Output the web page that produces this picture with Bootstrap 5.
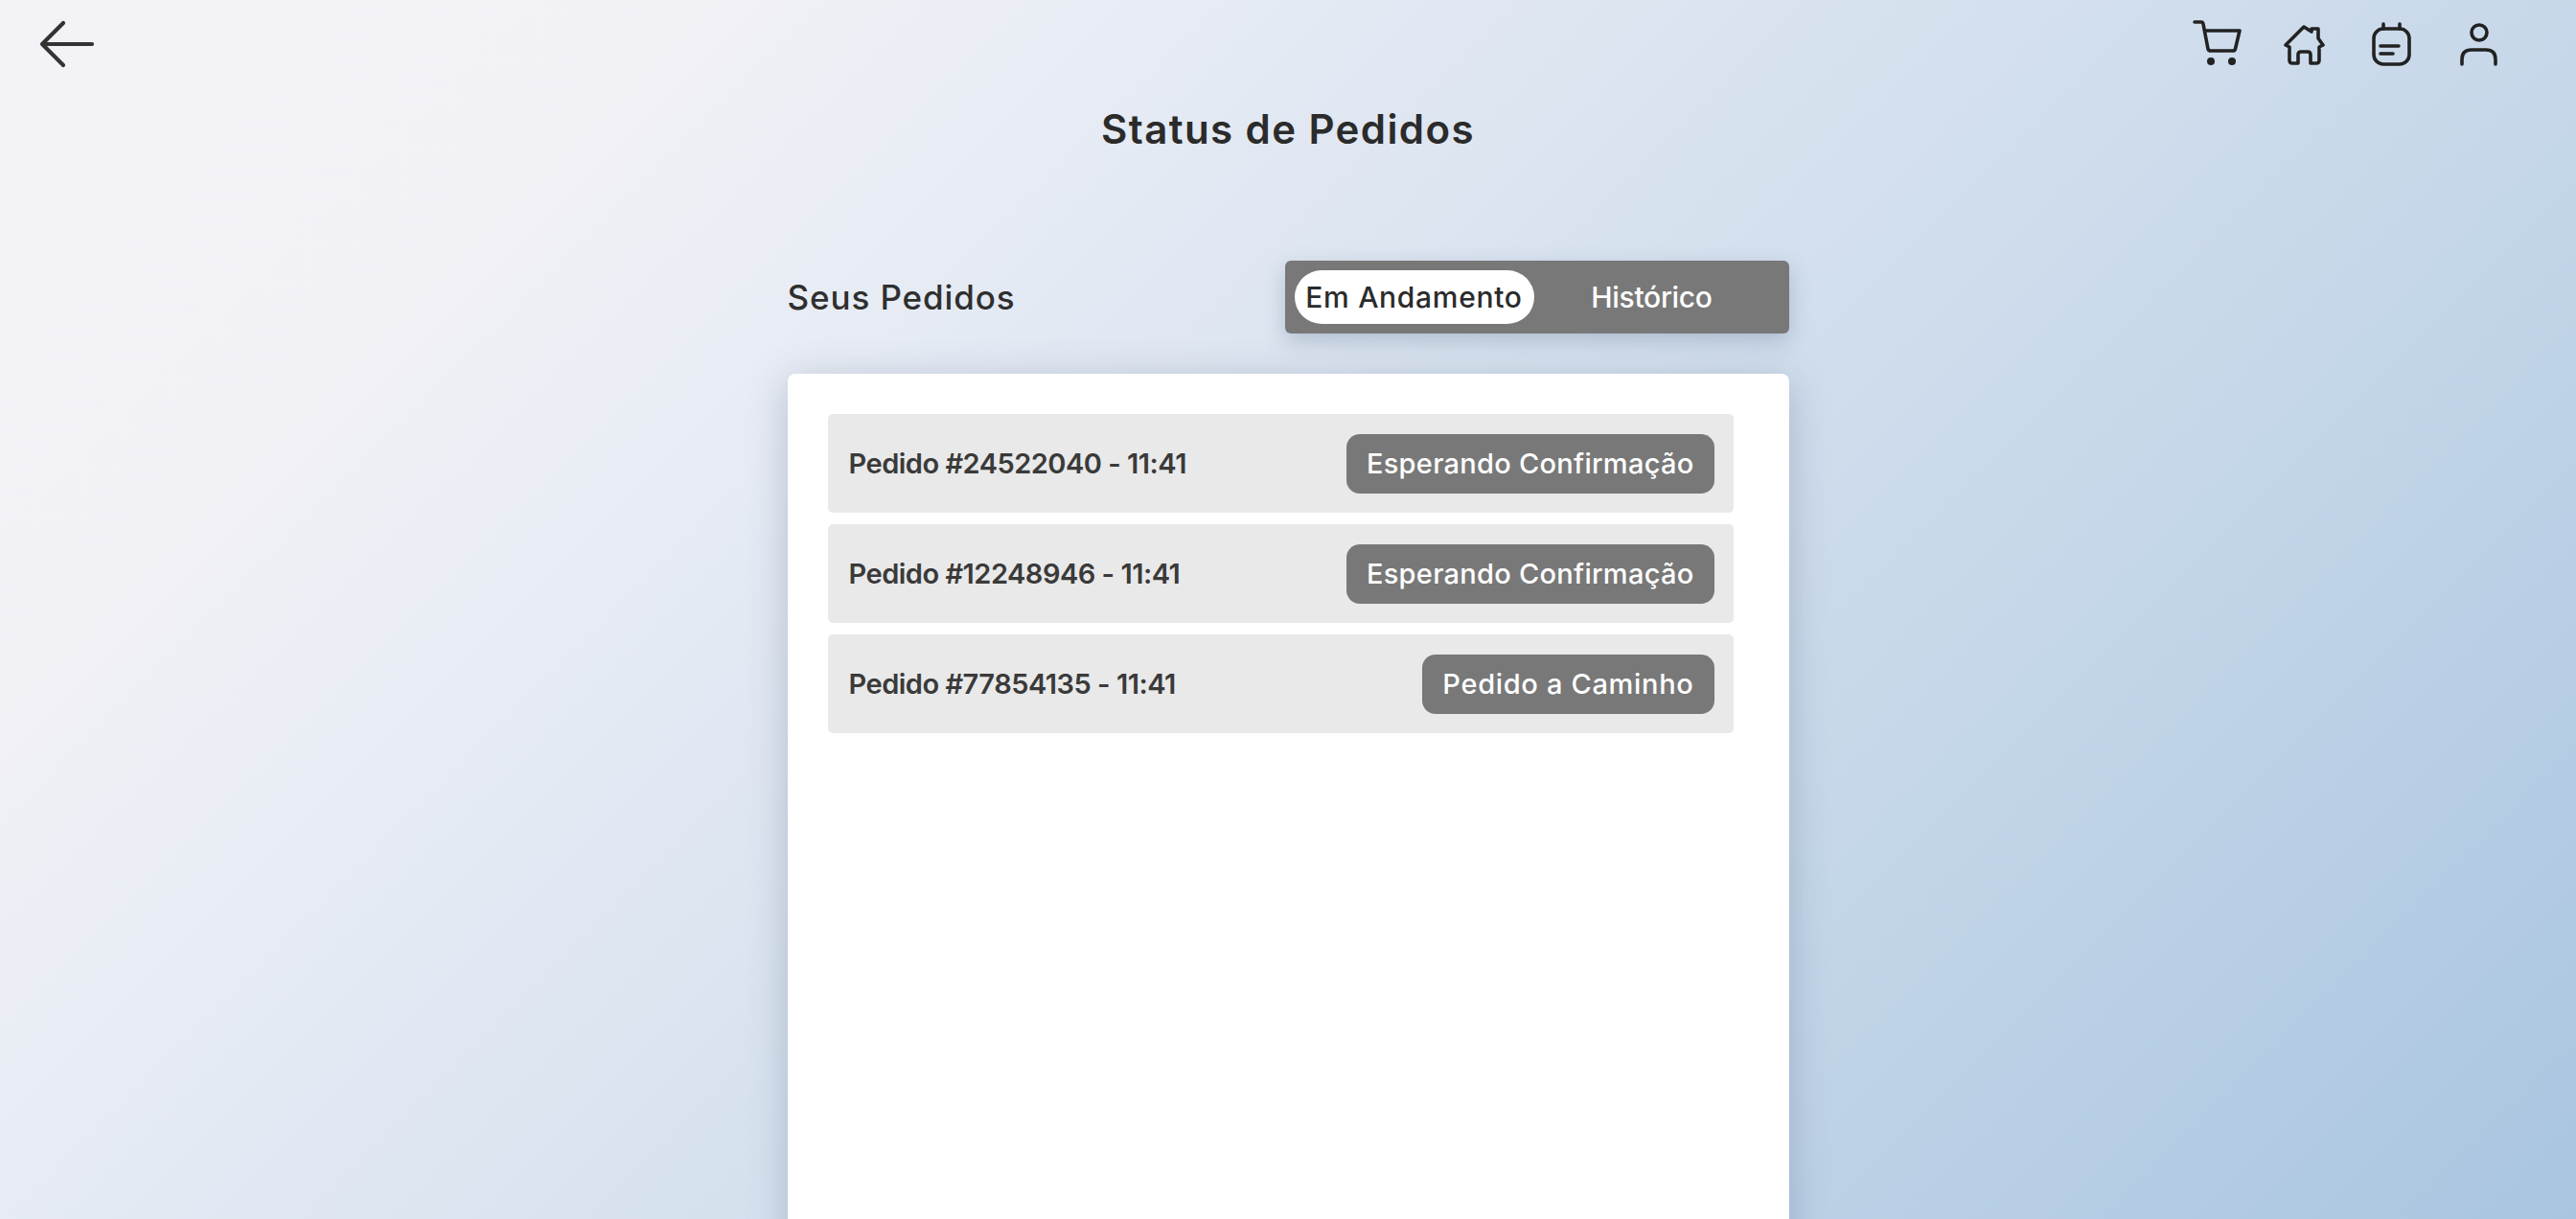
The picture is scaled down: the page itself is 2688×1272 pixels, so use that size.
<!DOCTYPE html>
<html lang="pt-BR"><head><meta charset="utf-8"><title>Status de Pedidos</title>
<link href="https://cdn.jsdelivr.net/npm/bootstrap@5.3.0/dist/css/bootstrap.min.css" rel="stylesheet">
<style>
html,body{height:100%;overflow:hidden}
body{font-family:Inter,"Noto Sans",sans-serif;background:linear-gradient(135deg,#f3f2f7 0%,#f1f1f6 19%,#e6ebf4 32%,#c9d9ea 66%,#a9c5e0 100%);color:#2b2b2b}
.top-bar{height:54px;padding:21px 0 0 41px}
.top-icons{padding-right:80px}
.ico{display:block;fill:none;stroke:#222;stroke-width:3.600;stroke-linecap:round;stroke-linejoin:round}
.ico-back{stroke:#333;stroke-width:4.200}
.gap-home{margin-left:43px}
.gap-note{margin-left:47px}
.gap-user{margin-left:48px}
.dot{fill:#222;stroke:none}
.page-title{font-size:42px;font-weight:600;line-height:48px;text-align:center;margin:57px 0 0;letter-spacing:1.400px;color:#2b2b2b}
.panel-wrap{width:1045px;margin:0 auto}
.head-row{margin-top:113px;height:76px}
.seus{font-size:35px;font-weight:500;line-height:1;letter-spacing:.9px;color:#2f2f2f;margin:0}
.seg{width:526px;height:76px;background:#787878;border-radius:6px;padding:10px;box-shadow:0 8px 22px rgba(60,80,110,.25)}
.seg-item{height:56px;border:0;background:transparent;color:#fff;font-size:30px;font-weight:500;border-radius:28px;padding:0;display:flex;align-items:center;justify-content:center}
.seg-on{width:250px;background:#fff;color:#2b2b2b;letter-spacing:.7px}
.seg-off{flex:1;padding-right:10px;letter-spacing:-.3px}
.sheet{background:#fff;border-radius:8px;margin-top:42px;height:1000px;padding:42px 58px 0 42px;box-shadow:0 8px 40px rgba(60,80,110,.28)}
.order{height:103px;background:#e9e9e9;border-radius:5px;padding:0 20px 0 22px;margin-bottom:12px}
.order-name{font-size:29px;font-weight:600;letter-spacing:-.5px;color:#3a3a3a}
.stat{height:62px;background:#787878;color:#fff;border-radius:14px;padding:0 21px;font-size:29px;font-weight:500;letter-spacing:.28px;display:flex;align-items:center}
.stat-wide{letter-spacing:.68px}
</style></head><body>
<header class="top-bar d-flex justify-content-between align-items-start">
<a href="#" aria-label="Voltar"><svg class="ico ico-back" width="58" height="50" viewBox="0 0 58 50"><path d="M3 25H55M3 25 25 3M3 25 25 47"/></svg></a>
<nav class="top-icons d-flex">
<svg class="ico" width="52" height="50" viewBox="0 0 52 50"><path d="M3 2H10Q11.500 2 12 4L17 30Q17.500 32 20 32H43Q45 32 45.500 30L50 11H14"/><circle class="dot" cx="20" cy="43" r="4"/><circle class="dot" cx="42" cy="43" r="4"/></svg>
<svg class="ico gap-home" width="44" height="50" viewBox="0 0 44 50"><path d="M3 26 22 7 30 12V9H37V19L42 26 38 28V42Q38 45 35 45H29V36Q29 33 26 33H19Q16 33 16 36V45H10Q7 45 7 42V28Z"/></svg>
<svg class="ico gap-note" width="44" height="50" viewBox="0 0 44 50"><rect x="4" y="9" width="37" height="37" rx="10"/><path d="M14 4V9M31 4V9M11 27H30M11 35H24"/></svg>
<svg class="ico gap-user" width="43" height="50" viewBox="0 0 43 50"><circle cx="22" cy="13" r="8"/><path d="M4 46V41Q4 31 14 31H29Q39 31 39 41V46"/></svg>
</nav>
</header>
<h1 class="page-title">Status de Pedidos</h1>
<main class="panel-wrap">
<div class="head-row d-flex justify-content-between align-items-center">
<h2 class="seus">Seus Pedidos</h2>
<div class="seg d-flex"><button class="seg-item seg-on">Em Andamento</button><button class="seg-item seg-off">Histórico</button></div>
</div>
<section class="sheet">
<div class="order d-flex justify-content-between align-items-center"><span class="order-name">Pedido #24522040 - 11:41</span><span class="stat">Esperando Confirmação</span></div>
<div class="order d-flex justify-content-between align-items-center"><span class="order-name">Pedido #12248946 - 11:41</span><span class="stat">Esperando Confirmação</span></div>
<div class="order d-flex justify-content-between align-items-center"><span class="order-name">Pedido #77854135 - 11:41</span><span class="stat stat-wide">Pedido a Caminho</span></div>
</section>
</main>
<script src="https://cdn.jsdelivr.net/npm/bootstrap@5.3.0/dist/js/bootstrap.bundle.min.js"></script>
</body></html>
